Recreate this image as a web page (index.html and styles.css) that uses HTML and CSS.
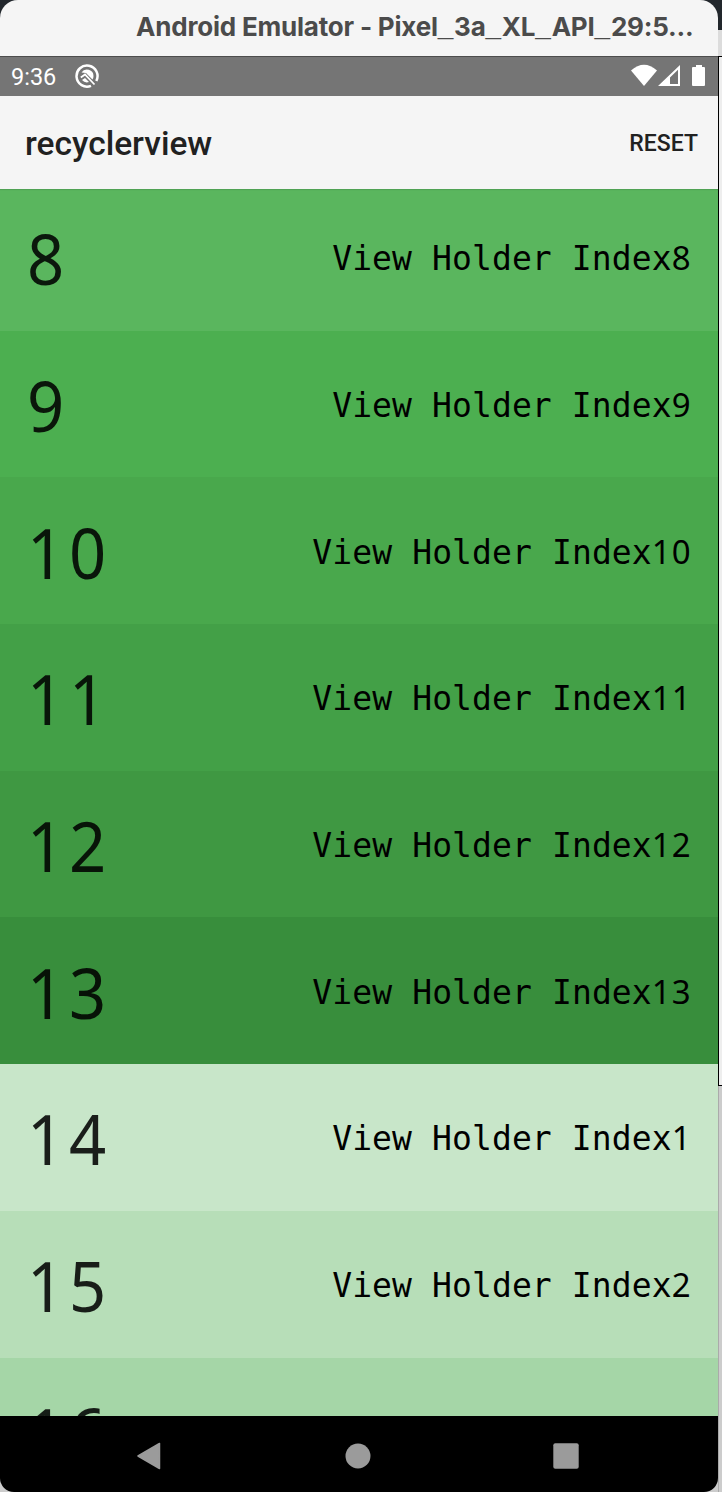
FILE: index.html
```html
<!DOCTYPE html>
<html lang="en"><head><meta charset="utf-8"><title>recyclerview</title><link rel="stylesheet" href="styles.css"></head>
<body>
<main class="phone">
<header class="titlebar"><span class="window-title">Android Emulator - Pixel<span class="u">_</span>3a<span class="u">_</span>XL<span class="u">_</span>API<span class="u">_</span>29:5...</span></header>
<div class="status"><span class="time">9:36</span>
<svg class="debug" viewBox="0 0 26 26"><path d="M17 22.800A10.500 10.500 0 1 1 22.300 18" fill="none" stroke="#fff" stroke-width="2.500"/><path d="M7.500 9.500A6.500 6.500 0 0 1 19.500 13Q19.500 15 18.500 16.500L12 10Z" fill="#fff"/><path d="M6.800 14.500L11 11.500L20.500 21.500" fill="none" stroke="#fff" stroke-width="1.800"/><path d="M8 17L11 15L15 19Q11 20.500 8 17Z" fill="#fff"/></svg>
<svg class="signals" viewBox="0 0 76 24"><path d="M0 6.500Q13-5 26 6.500L13 22Z" fill="#fff"/><path fill-rule="evenodd" d="M27 22L49 1V22ZM39 20H47V5.800L39 13.500Z" fill="#fff"/><path d="M62 3h3V1h6v2h2q1 0 1 1v17q0 1-1 1H62q-1 0-1-1V4q0-1 1-1Z" fill="#fff"/></svg></div>
<div class="appbar"><h1 class="app-title">recyclerview</h1><span class="reset">RESET</span></div>
<div class="list">
<div class="row g8"><span class="num">8</span><span class="label">View Holder Index<span class="d">8</span></span></div>
<div class="row g9"><span class="num">9</span><span class="label">View Holder Index<span class="d">9</span></span></div>
<div class="row g10"><span class="num">10</span><span class="label">View Holder Index<span class="d">10</span></span></div>
<div class="row g11"><span class="num">11</span><span class="label">View Holder Index<span class="d">11</span></span></div>
<div class="row g12"><span class="num">12</span><span class="label">View Holder Index<span class="d">12</span></span></div>
<div class="row g13"><span class="num">13</span><span class="label">View Holder Index<span class="d">13</span></span></div>
<div class="row g14"><span class="num">14</span><span class="label">View Holder Index<span class="d">1</span></span></div>
<div class="row g15"><span class="num">15</span><span class="label">View Holder Index<span class="d">2</span></span></div>
<div class="row g16"><span class="num">16</span></div>
</div>
<nav class="nav"><svg viewBox="0 0 718 76" width="718" height="76" fill="#9b9b9b"><path d="M138 40L159.500 27.500V52.500Z" stroke="#9b9b9b" stroke-width="1.500" stroke-linejoin="round"/><circle cx="358" cy="40" r="12.500"/><rect x="553.300" y="27.300" width="25.400" height="25.400" rx="2"/></svg></nav>
</main>
<aside class="edge"><div class="edge-top"></div><div class="edge-bar"></div><div class="edge-panel"></div><div class="edge-bottom"></div></aside>
</body></html>
```
FILE: styles.css
```css
*{box-sizing:border-box}
body{margin:0;width:722px;height:1492px;display:flex;overflow:hidden;background:linear-gradient(#22272c 45px,#ccc 45px);font-family:Roboto,sans-serif}
.phone{width:718px;height:1492px;display:flex;flex-direction:column;border-radius:18px 18px 14px 14px;overflow:hidden;flex:none}
.titlebar{height:57px;flex:none;background:#f5f5f5;border-bottom:1px solid #4d4d4d;padding:11px 0 0 136px;white-space:nowrap}
.window-title{font:700 26px/32px Inter,sans-serif;color:#4b4b4b;letter-spacing:-.2px}
.u{font:700 28px/28px "Liberation Sans",sans-serif;letter-spacing:.7px}
.status{height:39px;flex:none;background:#757575;display:flex;align-items:center;padding:0 11px;color:#fff}
.time{font-size:23.5px;width:63px}
.debug{width:26px;height:26px;margin-bottom:2px}
.signals{width:76px;height:24px;margin:0 0 1px auto}
.appbar{height:93px;flex:none;background:#f5f5f5;display:flex;align-items:center;justify-content:space-between;padding:2px 20px 0 25px;color:#212121}
.app-title{font-size:33.5px;font-weight:500;margin:0}
.reset{font-size:23px;font-weight:500}
.list{flex:1;min-height:0;display:flex;flex-direction:column;overflow:hidden;background:#a5d6a7}
.row{height:146.7px;flex:none;display:flex;align-items:center;justify-content:space-between;padding:0 26.5px 0 26.5px;color:#000}
.row:first-child{margin-top:-5px;box-shadow:inset 0 7px 1px -1px rgba(0,0,0,.12)}
.num{font:70px/80px "Noto Sans",sans-serif;letter-spacing:5.2px;transform:translateY(.5px) scaleX(.93);transform-origin:left;color:rgba(0,0,0,.87)}
.label{font:33px/40px "DejaVu Sans Mono",monospace;letter-spacing:.1px;padding-top:4px}
.d{font-family:"Noto Sans",sans-serif;line-height:1;letter-spacing:.98px}
.g8{background:#5ab65e}.g9{background:#4caf50}.g10{background:#49a84c}.g11{background:#43a047}.g12{background:#3f9842}.g13{background:#388e3c}.g14{background:#c8e6c9}.g15{background:#b7deb8}.g16{background:#a5d6a7}
.nav{height:76px;flex:none;background:#000}
.edge{width:4px;height:1492px;display:flex;flex-direction:column;flex:none}
.edge-top{height:30px;background:#22272c}
.edge-bar{height:26px;background:#dcdcdc}
.edge-panel{height:1030px;background:#eee;border:1px solid #000;border-right:0}
.edge-bottom{flex:1;background:#ccc;border-left:1px solid #aaa}
```
